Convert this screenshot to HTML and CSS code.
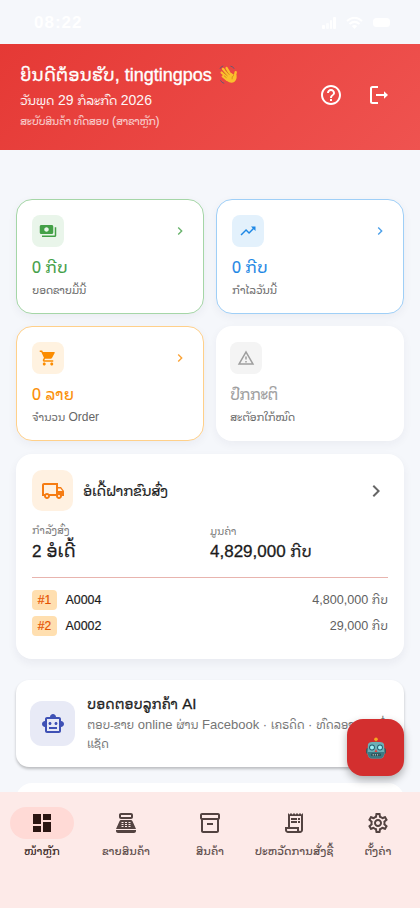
FILE: index.html
```html
<!DOCTYPE html>
<html lang="lo">
<head>
<meta charset="utf-8">
<meta name="viewport" content="width=device-width">
<title>tingtingpos</title>
<link rel="stylesheet" href="styles.css">
</head>
<body>
<div class="app">
  <div class="status">
    <span class="clock">08:22</span>
    <span class="signals">
      <svg width="16" height="12" viewBox="0 0 16 12"><rect x="1" y="8" width="3" height="4" rx="1"/><rect x="5" y="6" width="3" height="6" rx="1" opacity=".7"/><rect x="9" y="3" width="2" height="9" rx="1"/><rect x="12" y="0" width="3" height="12" rx="1"/></svg>
      <svg width="17" height="12" viewBox="0 0 17 12"><path d="M1 4Q8.500-2.500 16 4M3.500 7Q8.500 2.800 13.500 7" fill="none" stroke="#fff" stroke-width="2"/><path d="M8.500 12L5.800 9Q8.500 7 11.200 9z"/></svg>
      <svg width="20" height="12" viewBox="0 0 20 12"><rect x="1" y="1" width="17" height="9" rx="3.500"/></svg>
    </span>
  </div>
  <header class="hero">
    <div class="hero-text">
      <h1 class="welcome"><span class="lo">ຍິນດີຕ້ອນຮັບ</span>, tingtingpos <svg class="wave" width="19" height="19" viewBox="0 0 20 20"><g fill="none" stroke="#fbc02d" stroke-width="2.500" stroke-linecap="round"><path d="M9 13L2.800 8M10 11L4.300 4.200M12 10L8 3.200M8.500 15.500L4 12M16.500 12.500L17.600 7.500"/></g><path d="M6.500 12Q9 8.500 13 8.500L16 10.500 18.300 10.500Q19.500 15 16 17.800 12.500 20 8 16.500z" fill="#fbc02d"/><path d="M4 7.400L9 11.600M6.300 5L11 10.300M5.300 11.300L8 13.500M13.800 15Q13 12 15.800 10.800" fill="none" stroke="#c9791a" stroke-width=".7"/><path d="M1 4Q2 1.500 4.500 1M1.500 16Q3 18.800 5.500 19.300M12 1.200Q15 1.500 16 4" fill="none" stroke="#6b5570" stroke-width="1"/></svg></h1>
      <p class="date"><span class="lo">ວັນພຸດ</span> 29 <span class="lo">ກໍລະກົດ</span> 2026</p>
      <p class="shop"><span class="lo">ສະບັບສິນຄ້າ ທົດສອບ</span> (<span class="lo">ສາຂາຫຼັກ</span>)</p>
    </div>
    <div class="hero-actions">
      <svg width="24" height="24" viewBox="0 0 24 24"><path d="M11 18h2v-2h-2v2zm1-16C6.480 2 2 6.480 2 12s4.480 10 10 10 10-4.480 10-10S17.520 2 12 2zm0 18c-4.410 0-8-3.590-8-8s3.590-8 8-8 8 3.590 8 8-3.590 8-8 8zm0-14c-2.210 0-4 1.790-4 4h2c0-1.100.9-2 2-2s2 .9 2 2c0 2-3 1.750-3 5h2c0-2.250 3-2.500 3-5 0-2.210-1.790-4-4-4z"/></svg>
      <svg width="24" height="24" viewBox="0 0 24 24"><path d="M11 4H5.500Q4 4 4 5.500v13Q4 20 5.500 20H11M9 12h9" fill="none" stroke="#fff" stroke-width="2"/><path d="M17 8.300L21 12l-4 3.700z"/></svg>
    </div>
  </header>
  <main class="content">
    <section class="stats">
      <article class="stat green">
        <div class="stat-top"><span class="tile"><svg width="18" height="18" viewBox="0 0 24 24"><path d="M19 14V6c0-1.100-.9-2-2-2H3c-1.100 0-2 .9-2 2v8c0 1.100.9 2 2 2h14c1.100 0 2-.9 2-2zm-9-1c-1.660 0-3-1.340-3-3s1.340-3 3-3 3 1.340 3 3-1.340 3-3 3zm13-6v11c0 1.100-.9 2-2 2H4v-2h17V7h2z"/></svg></span><svg class="go" width="16" height="16" viewBox="0 0 24 24"><path d="M10 6L8.590 7.410 13.170 12l-4.580 4.590L10 18l6-6z"/></svg></div>
        <p class="value">0 <span class="lo">ກີບ</span></p>
        <p class="label"><span class="lo">ຍອດຂາຍມື້ນີ້</span></p>
      </article>
      <article class="stat blue">
        <div class="stat-top"><span class="tile"><svg width="18" height="18" viewBox="0 0 24 24"><path d="M16 6l2.290 2.290-4.880 4.880-4-4L2 16.590 3.410 18l6-6 4 4 6.300-6.290L22 12V6z"/></svg></span><svg class="go" width="16" height="16" viewBox="0 0 24 24"><path d="M10 6L8.590 7.410 13.170 12l-4.580 4.590L10 18l6-6z"/></svg></div>
        <p class="value">0 <span class="lo">ກີບ</span></p>
        <p class="label"><span class="lo">ກຳໄລວັນນີ້</span></p>
      </article>
      <article class="stat orange">
        <div class="stat-top"><span class="tile"><svg width="18" height="18" viewBox="0 0 24 24"><path d="M7 18c-1.100 0-1.990.9-1.990 2S5.900 22 7 22s2-.9 2-2-.9-2-2-2zM1 2v2h2l3.600 7.590-1.350 2.450c-.16.280-.25.610-.25.960 0 1.100.9 2 2 2h12v-2H7.420c-.14 0-.25-.11-.25-.25l.03-.12.9-1.630h7.450c.75 0 1.410-.41 1.750-1.030l3.580-6.490A1.003 1.003 0 0020 4H5.210l-.94-2H1zm16 16c-1.100 0-1.990.9-1.990 2s.89 2 1.990 2 2-.9 2-2-.9-2-2-2z"/></svg></span><svg class="go" width="16" height="16" viewBox="0 0 24 24"><path d="M10 6L8.590 7.410 13.170 12l-4.580 4.590L10 18l6-6z"/></svg></div>
        <p class="value">0 <span class="lo">ລາຍ</span></p>
        <p class="label"><span class="lo">ຈຳນວນ</span> Order</p>
      </article>
      <article class="stat plain">
        <div class="stat-top"><span class="tile"><svg width="18" height="18" viewBox="0 0 24 24"><path d="M12 5.990L19.530 19H4.470L12 5.990M12 2L1 21h22L12 2zm1 14h-2v2h2v-2zm0-6h-2v4h2v-4z"/></svg></span></div>
        <p class="value"><span class="lo">ປົກກະຕິ</span></p>
        <p class="label"><span class="lo">ສະຕັອກໃກ້ໝົດ</span></p>
      </article>
    </section>

    <section class="delivery">
      <div class="delivery-head">
        <span class="truck"><svg width="24" height="24" viewBox="0 0 24 24"><path d="M20 8h-3V4H3c-1.100 0-2 .9-2 2v11h2c0 1.660 1.340 3 3 3s3-1.340 3-3h6c0 1.660 1.340 3 3 3s3-1.340 3-3h2v-5l-3-4zm-.5 1.500l1.960 2.500H17V9.500h2.500zM6 18c-.55 0-1-.45-1-1s.45-1 1-1 1 .45 1 1-.45 1-1 1zm2.220-3c-.55-.61-1.330-1-2.220-1s-1.670.39-2.220 1H3V6h12v9H8.220zM18 18c-.55 0-1-.45-1-1s.45-1 1-1 1 .45 1 1-.45 1-1 1z"/></svg></span>
        <h2><span class="lo">ອໍເດີ້ຝາກຂົນສົ່ງ</span></h2>
        <svg class="more" width="24" height="24" viewBox="0 0 24 24"><path d="M10 6L8.590 7.410 13.170 12l-4.580 4.590L10 18l6-6z"/></svg>
      </div>
      <div class="totals">
        <div><p class="cap"><span class="lo">ກຳລັງສົ່ງ</span></p><p class="sum wide">2 <span class="lo">ອໍເດີ້</span></p></div>
        <div><p class="cap low"><span class="lo">ມູນຄ່າ</span></p><p class="sum">4,829,000 <span class="lo">ກີບ</span></p></div>
      </div>
      <ul class="orders">
        <li><span class="rank">#1</span><span class="code">A0004</span><span class="amount">4,800,000 <span class="lo">ກີບ</span></span></li>
        <li><span class="rank">#2</span><span class="code">A0002</span><span class="amount">29,000 <span class="lo">ກີບ</span></span></li>
      </ul>
    </section>

    <section class="bot">
      <span class="bot-icon"><svg width="24" height="24" viewBox="0 0 24 24"><path fill-rule="evenodd" d="M20 9V7c0-1.100-.9-2-2-2h-3c0-1.660-1.340-3-3-3S9 3.340 9 5H6c-1.100 0-2 .9-2 2v2c-1.660 0-3 1.340-3 3s1.340 3 3 3v4c0 1.100.9 2 2 2h12c1.100 0 2-.9 2-2v-4c1.660 0 3-1.340 3-3s-1.340-3-3-3zm-2 10H6V7h12v12zm-9-6c-.83 0-1.500-.67-1.500-1.500S8.170 10 9 10s1.500.67 1.500 1.500S9.830 13 9 13zm7.500-1.500c0 .83-.67 1.500-1.500 1.500s-1.500-.67-1.500-1.500.67-1.500 1.500-1.500 1.500.67 1.500 1.500zM8 15h8v2H8v-2z"/></svg></span>
      <div class="bot-text">
        <h2><span class="lo">ບອດຕອບລູກຄ້າ</span> AI</h2>
        <p><span class="lo">ຕອບ-ຂາຍ</span> online <span class="lo">ຜ່ານ</span> Facebook · <span class="lo">ເຄຣດິດ</span> · <span class="lo">ທົດລອງຖາມທີ່</span></p>
        <p><span class="lo">ແຊັດ</span></p>
      </div>
    </section>
    <section class="next"></section>
  </main>

  <button class="fab"><svg width="22" height="22" viewBox="0 0 22 22"><path d="M11 2v5" stroke="#a9682d" stroke-width="1.500"/><circle cx="11" cy="2.300" r="1.800" fill="#f6a91f"/><rect x="1" y="11" width="20" height="6" rx="2" fill="#3d565c"/><path d="M3 7Q4 5 7 5h8q3 0 4 2l.6 9q-.5 5.500-4.600 5.500H7Q2.900 21.500 2.400 16z" fill="#6cb0b6"/><path d="M2.500 15h17q-.5 6.500-4.500 6.500H7Q3 21.500 2.500 15z" fill="#3c7b84"/><circle cx="7" cy="10.500" r="2.900" fill="#245c6c"/><circle cx="15" cy="10.500" r="2.900" fill="#245c6c"/><circle cx="7" cy="10.500" r="2" fill="#9ff2f8"/><circle cx="15" cy="10.500" r="2" fill="#9ff2f8"/><path d="M11 12l1.500 3h-3z" fill="#e0443f"/><path d="M6.500 17.800h9" stroke="#19343b" stroke-width="2.400"/><path d="M7.500 17.800h7" stroke="#c3dadd" stroke-width="1.200" stroke-dasharray="1.400 .8"/></svg></button>

  <nav class="tabs">
    <a class="tab active"><span class="pill"><svg width="24" height="24" viewBox="0 0 24 24"><path d="M3 13h8V3H3v10zm0 8h8v-6H3v6zm10 0h8V11h-8v10zm0-18v6h8V3h-8z"/></svg></span><span class="lo">ໜ້າຫຼັກ</span></a>
    <a class="tab"><span class="pill"><svg width="24" height="24" viewBox="0 0 24 24"><path fill-rule="evenodd" d="M17 2H7c-1.100 0-2 .9-2 2v2c0 1.100.9 2 2 2h10c1.100 0 2-.9 2-2V4c0-1.100-.9-2-2-2zm0 4H7V4h10v2zM20 22H4c-1.100 0-2-.9-2-2v-1h20v1c0 1.100-.9 2-2 2zM18.530 10.190A2 2 0 0016.700 9H7.300c-.79 0-1.510.47-1.830 1.190L2 18h20zM7.500 11h2v1h-2zm0 2h2v1h-2zm0 2h2v1h-2zm3.500-4h2v1h-2zm0 2h2v1h-2zm0 2h2v1h-2zm3.500-4h2v1h-2zm0 2h2v1h-2zm0 2h2v1h-2z"/></svg></span><span class="lo">ຂາຍສິນຄ້າ</span></a>
    <a class="tab"><span class="pill"><svg width="24" height="24" viewBox="0 0 24 24"><path d="M20 2H4c-1 0-2 .9-2 2v3.010c0 .72.430 1.340 1 1.690V20c0 1.100 1.100 2 2 2h14c.9 0 2-.9 2-2V8.700c.57-.35 1-.97 1-1.690V4c0-1.100-1-2-2-2zm-1 18H5V9h14v11zm1-13H4V4h16v3zM9 12h6v2H9z"/></svg></span><span class="lo">ສິນຄ້າ</span></a>
    <a class="tab"><span class="pill"><svg width="24" height="24" viewBox="0 0 24 24"><path d="M19.500 3.500L18 2l-1.500 1.500L15 2l-1.500 1.500L12 2l-1.500 1.500L9 2 7.500 3.500 6 2v14H3v3c0 1.660 1.340 3 3 3h12c1.660 0 3-1.340 3-3V2l-1.500 1.500zM15 20H6c-.55 0-1-.45-1-1v-1h10v2zm4-1c0 .55-.45 1-1 1s-1-.45-1-1v-3H8V5h11v14zM9 7h6v2H9zM16 7h2v2h-2zM9 10h6v2H9zM16 10h2v2h-2z"/></svg></span><span class="lo">ປະຫວັດການສັ່ງຊື້</span></a>
    <a class="tab"><span class="pill"><svg width="24" height="24" viewBox="0 0 24 24"><path d="M19.430 12.980c.04-.32.07-.64.07-.98 0-.34-.03-.66-.07-.98l2.110-1.650c.19-.15.24-.42.12-.64l-2-3.460c-.09-.16-.26-.25-.44-.25-.06 0-.12.01-.17.03l-2.490 1c-.52-.4-1.080-.73-1.690-.98l-.38-2.650C14.460 2.180 14.250 2 14 2h-4c-.25 0-.46.18-.49.42l-.38 2.650c-.61.25-1.170.59-1.690.98l-2.490-1c-.06-.02-.12-.03-.18-.03-.17 0-.34.09-.43.25l-2 3.460c-.13.22-.07.49.12.64l2.110 1.650c-.04.32-.07.65-.07.98 0 .33.03.66.07.98l-2.110 1.650c-.19.15-.24.42-.12.64l2 3.460c.09.16.26.25.44.25.06 0 .12-.01.17-.03l2.490-1c.52.4 1.080.73 1.690.98l.38 2.650c.03.24.24.42.49.42h4c.25 0 .46-.18.49-.42l.38-2.650c.61-.25 1.170-.59 1.690-.98l2.490 1c.06.02.12.03.18.03.17 0 .34-.09.43-.25l2-3.460c.12-.22.07-.49-.12-.64l-2.110-1.650zm-1.980-1.710c.04.31.05.52.05.73 0 .21-.02.43-.05.73l-.14 1.130.89.7 1.080.84-.7 1.210-1.270-.51-1.040-.42-.9.68c-.43.32-.84.56-1.250.73l-1.060.43-.16 1.130-.2 1.350h-1.400l-.19-1.350-.16-1.130-1.060-.43c-.43-.18-.83-.41-1.230-.71l-.91-.7-1.060.43-1.270.51-.7-1.210 1.080-.84.89-.7-.14-1.130c-.03-.31-.05-.54-.05-.74s.02-.43.05-.73l.14-1.130-.89-.7-1.080-.84.7-1.210 1.270.51 1.040.42.9-.68c.43-.32.84-.56 1.250-.73l1.060-.43.16-1.130.2-1.350h1.390l.19 1.350.16 1.130 1.060.43c.43.18.83.41 1.230.71l.91.7 1.060-.43 1.270-.51.7 1.210-1.070.85-.89.7.14 1.130zM12 8c-2.210 0-4 1.790-4 4s1.790 4 4 4 4-1.790 4-4-1.790-4-4-4zm0 6c-1.100 0-2-.9-2-2s.9-2 2-2 2 .9 2 2-.9 2-2 2z"/></svg></span><span class="lo">ຕັ້ງຄ່າ</span></a>
  </nav>
</div>
</body>
</html>
```
FILE: styles.css
```css
* { box-sizing: border-box; }
html, body, h1, h2, p, ul { margin: 0; padding: 0; }
body {
  width: 420px; height: 908px; overflow: hidden;
  background: #f5f7fb; color: #1b1b1b;
  font-family: "Liberation Sans", "Noto Sans Lao Looped", "Noto Sans Lao", "DejaVu Sans", sans-serif;
}
ul { list-style: none; }
svg { fill: currentColor; flex: none; }
p, h1, h2 { white-space: nowrap; font-weight: 400; }
.lo { line-height: 1; }

.app { position: relative; display: flex; flex-direction: column; width: 420px; height: 908px; overflow: hidden; }
.status { flex: none; height: 44px; padding: 2px 28px 0 34px; display: flex; align-items: center; justify-content: space-between; color: #fff; }
.clock { font: 700 17px/20px "Liberation Sans", sans-serif; letter-spacing: 1px; }
.signals { display: flex; gap: 9px; }

.hero { flex: none; height: 106px; padding: 0 29px 0 20px; display: flex; justify-content: space-between; color: #fff; background: linear-gradient(135deg, #e53935, #ef5350); }
.hero-text { padding-top: 19px; }
.welcome { font-size: 18px; line-height: 25px; -webkit-text-stroke: .35px; }
.welcome .lo { font-size: .975em; }
.wave { vertical-align: -3px; margin-left: 2px; -webkit-text-stroke: 0; }
.date { font-size: 14px; line-height: 22px; margin-top: 1px; opacity: .95; }
.date .lo { font-size: .92em; letter-spacing: -.6px; }
.shop { font-size: 12px; line-height: 18px; margin-top: 1px; opacity: .78; }
.shop .lo { font-size: .9em; letter-spacing: -.5px; }
.hero-actions { display: flex; gap: 24px; padding-top: 39px; }

.content { flex: 1; padding: 49px 16px 0; min-height: 0; overflow: hidden; }
.stats { display: grid; grid-template-columns: 188px 188px; gap: 12px; }
.stat { height: 115px; padding: 15px 15px 0; border: 1px solid transparent; border-radius: 16px; background: #fff; box-shadow: 0 3px 10px rgba(30, 40, 70, .05); }
.stat-top { display: flex; align-items: center; justify-content: space-between; }
.tile { width: 32px; height: 32px; border-radius: 8px; display: grid; place-items: center; }
.value { font-size: 16px; line-height: 24px; margin-top: 9px; -webkit-text-stroke: .15px; }
.label { font-size: 12px; line-height: 18px; margin-top: 1px; color: #666; }
.label .lo { font-size: .92em; letter-spacing: -.4px; }
.green { border-color: #a5d6a7; color: #43a047; }
.green .tile { background: #e9f5ea; }
.blue { border-color: #9fcff7; color: #1e88e5; }
.blue .tile { background: #e3f1fc; }
.orange { border-color: #ffd08a; color: #fb8c00; }
.orange .tile { background: #fff2e0; }
.orange .value .lo { font-size: .98em; }
.plain { padding-left: 13px; color: #9e9e9e; }
.plain .tile { background: #f4f4f4; }
.plain .value .lo { font-size: .95em; letter-spacing: -.6px; }
.go { opacity: .8; }

.delivery { height: 205px; margin-top: 13px; padding: 16px; border-radius: 16px; background: #fff; box-shadow: 0 4px 10px rgba(30, 40, 70, .06); }
.delivery-head { display: flex; align-items: center; height: 41px; }
.truck { width: 41px; height: 41px; display: grid; place-items: center; border-radius: 10px; background: #fff1e1; color: #f57c13; }
.delivery-head h2 { font-size: 14.200px; line-height: 22px; letter-spacing: -.3px; margin-left: 10px; -webkit-text-stroke: .2px; }
.more { margin-left: auto; color: #666; }
.totals { display: grid; grid-template-columns: 1fr 1fr; height: 67px; padding-top: 10px; border-bottom: 1px solid #e8b4ae; }
.cap { height: 20px; font-size: 10.500px; line-height: 19px; letter-spacing: -.2px; color: #757575; }
.low { padding-top: 1px; }
.sum { font-size: 17px; line-height: 21px; -webkit-text-stroke: .3px; }
.sum .lo { font-size: .9em; }
.wide .lo { font-size: 1.030em; }
.orders { padding-top: 12px; }
.orders li { display: flex; align-items: center; height: 20px; margin-bottom: 6px; font-size: 12.600px; }
.orders .lo { font-size: .93em; }
.rank { width: 25px; height: 20px; line-height: 20px; font-size: 12px; text-align: center; border-radius: 4px; background: #ffdfb0; color: #e65100; -webkit-text-stroke: .2px; }
.code { margin-left: 8.500px; font-size: 12.400px; -webkit-text-stroke: .2px; }
.amount { margin-left: auto; color: #616161; }

.bot { display: flex; height: 87px; margin-top: 21px; padding: 0 14px; border-radius: 13px; background: #fff; box-shadow: 0 2px 3px rgba(0, 0, 0, .24); }
.bot-icon { flex: none; width: 45px; height: 45px; margin-top: 21px; display: grid; place-items: center; border-radius: 12px; background: #e8eaf6; color: #3f51b5; }
.bot-text { margin: 13px 0 0 12px; }
.bot-text h2 { font-size: 15px; line-height: 22px; -webkit-text-stroke: .3px; }
.bot-text h2 .lo { font-size: .92em; }
.bot-text p { font-size: 13px; line-height: 19px; color: #757575; }
.bot-text p .lo { font-size: .9em; letter-spacing: -.25px; }
.next { height: 60px; margin-top: 16px; border-radius: 16px; background: #fff; }

.fab { position: absolute; left: 347px; top: 719px; width: 57px; height: 57px; padding: 0; border: 0; border-radius: 16px; display: grid; place-items: center; background: #d32f2f; box-shadow: 0 4px 9px rgba(0, 0, 0, .3); }

.tabs { flex: none; height: 116px; padding-top: 15px; display: grid; grid-template-columns: repeat(5, 84px); background: #fdeae8; color: #534341; }
.tab { display: flex; flex-direction: column; align-items: center; font-size: 11px; white-space: nowrap; }
.tab .lo { line-height: 24px; -webkit-text-stroke: .15px; }
.pill { width: 64px; height: 32px; display: grid; place-items: center; border-radius: 16px; }
.active { color: #2c1512; }
.active .pill { background: #ffdad6; }
```
